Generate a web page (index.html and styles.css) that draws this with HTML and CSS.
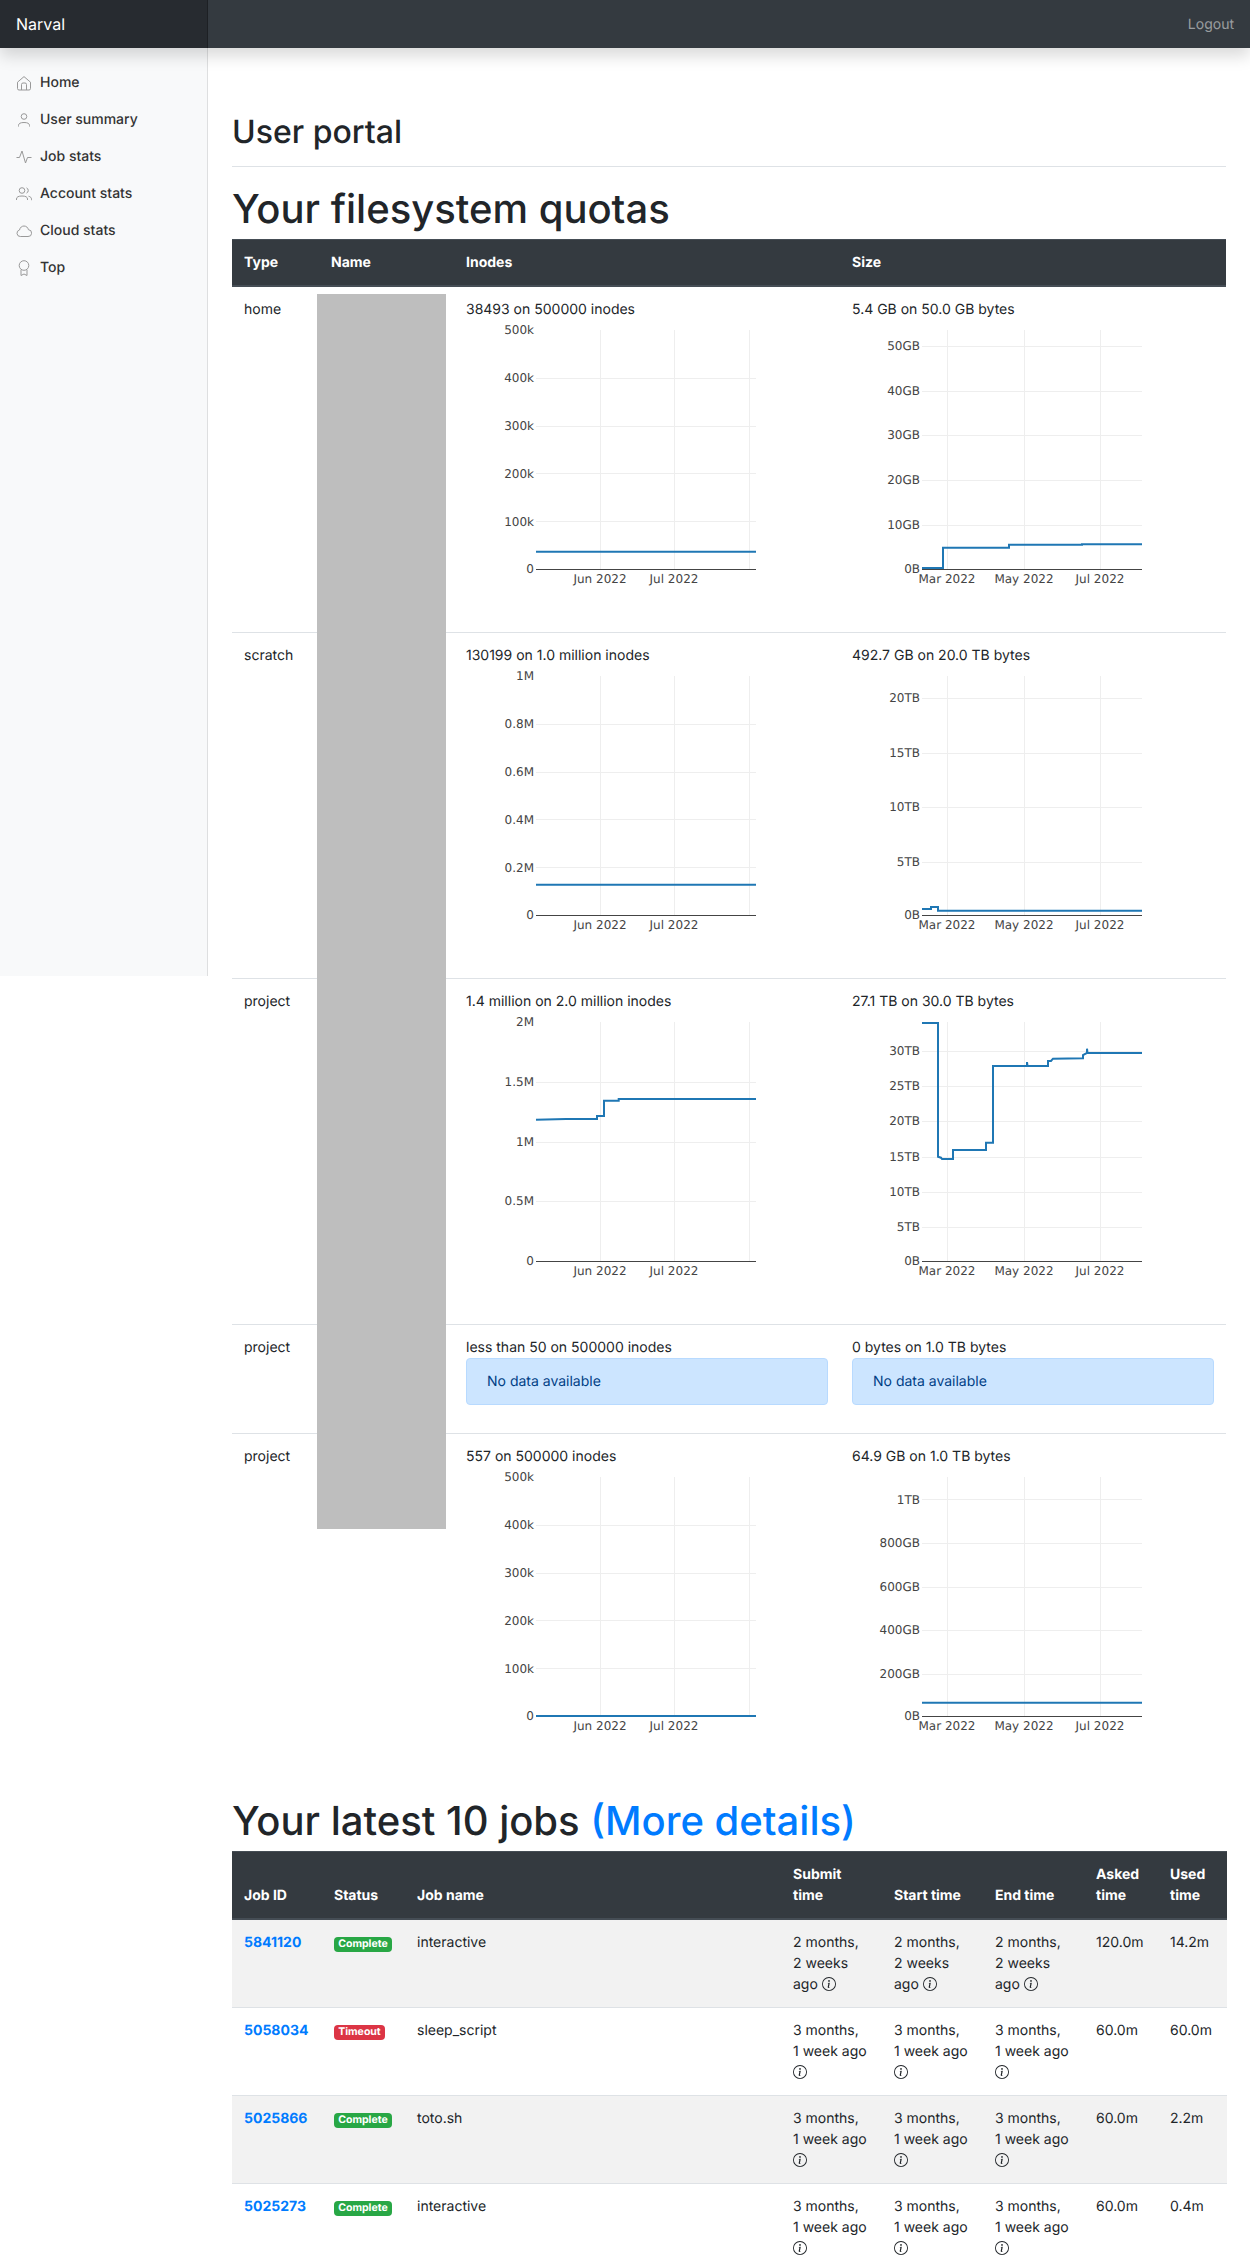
FILE: index.html
```html
<!DOCTYPE html>
<html lang="en">
<head>
<meta charset="utf-8">
<title>Narval</title>
<link rel="stylesheet" href="styles.css">
</head>
<body>
<header class="navbar">
  <a class="brand" href="#">Narval</a>
  <a class="logout" href="#">Logout</a>
</header>
<div class="layout">
  <nav class="sidebar">
    <a class="side-link" href="#"><svg class="side-icon" viewBox="0 0 16 16"><path d="M1.500 7.200 8 1.600l6.500 5.600V13.500a1.500 1.500 0 0 1-1.500 1.500H3a1.500 1.500 0 0 1-1.500-1.500Z"/><path d="M5.500 15V9.500a1.500 1.500 0 0 1 1.500-1.500h2a1.500 1.500 0 0 1 1.500 1.500V15"/></svg>Home</a>
    <a class="side-link" href="#"><svg class="side-icon" viewBox="0 0 16 16"><circle cx="8" cy="4.500" r="2.800"/><path d="M2.500 14.500v-1c0-2 1.800-3 5.500-3s5.500 1 5.500 3v1"/></svg>User summary</a>
    <a class="side-link" href="#"><svg class="side-icon" viewBox="0 0 16 16"><path d="M0.500 8.500h3L6 2l3.500 12 2-5.500h4"/></svg>Job stats</a>
    <a class="side-link" href="#"><svg class="side-icon" viewBox="0 0 16 16"><circle cx="6" cy="4.500" r="2.800"/><path d="M0.500 14v-1c0-2 1.800-3 5.500-3s5.500 1 5.500 3v1"/><path d="M10.500 1.900a2.800 2.800 0 0 1 0 5.200M12.500 10.200c2 .5 3 1.500 3 3v1"/></svg>Account stats</a>
    <a class="side-link" href="#"><svg class="side-icon" viewBox="0 0 16 16"><path d="M4.300 13.500A3.300 3.300 0 0 1 3.500 7C4 4.400 6 3 8 3c2.300 0 4 1.600 4.400 3.700A3.400 3.400 0 0 1 12 13.500Z"/></svg>Cloud stats</a>
    <a class="side-link" href="#"><svg class="side-icon" viewBox="0 0 16 16"><circle cx="8" cy="5.500" r="4.800"/><path d="M5 9.800V15.500l3-1.500 3 1.500V9.800"/></svg>Top</a>
  </nav>
  <main class="main">
    <h2 class="page-title">User portal</h2>
    <h1 class="section-title">Your filesystem quotas</h1>
    <table class="table quota-table">
      <thead>
        <tr>
          <th class="q-type">Type</th>
          <th class="q-name">Name</th>
          <th class="q-col">Inodes</th>
          <th class="q-col">Size</th>
        </tr>
      </thead>
      <tbody>
        <tr>
          <td>home</td>
          <td></td>
          <td>38493 on 500000 inodes
            <svg class="chart" viewBox="0 -1 362 300">
              <g class="grid"><path d="M134.500 9V248M208.500 9V248M283.500 9V248M70 57.500H290M70 105.500H290M70 152.500H290M70 200.500H290"/></g>
              <g class="y-labels"><text x="68" y="13">500k</text><text x="68" y="61">400k</text><text x="68" y="109">300k</text><text x="68" y="157">200k</text><text x="68" y="205">100k</text><text x="68" y="252">0</text></g>
              <g class="x-labels"><text x="134" y="262">Jun 2022</text><text x="208" y="262">Jul 2022</text></g>
              <path class="axis" d="M70 248.500H290"/>
              <polyline class="trace" points="70,230.700 290,230.700"/>
            </svg>
          </td>
          <td>5.4 GB on 50.0 GB bytes
            <svg class="chart" viewBox="0 -1 362 300">
              <g class="grid"><path d="M95.500 9V248M172.500 9V248M248.500 9V248M70 25.500H290M70 70.500H290M70 114.500H290M70 159.500H290M70 204.500H290"/></g>
              <g class="y-labels"><text x="68" y="29">50GB</text><text x="68" y="74">40GB</text><text x="68" y="118">30GB</text><text x="68" y="163">20GB</text><text x="68" y="208">10GB</text><text x="68" y="252">0B</text></g>
              <g class="x-labels"><text x="95" y="262">Mar 2022</text><text x="172" y="262">May 2022</text><text x="248" y="262">Jul 2022</text></g>
              <path class="axis" d="M70 248.500H290"/>
              <polyline class="trace" points="70,247 91,247 91,226.700 157,226.700 157,223.700 230,223.700 230,223.200 290,223.200"/>
            </svg>
          </td>
        </tr>
        <tr>
          <td>scratch</td>
          <td></td>
          <td>130199 on 1.0 million inodes
            <svg class="chart" viewBox="0 -1 362 300">
              <g class="grid"><path d="M134.500 9V248M208.500 9V248M283.500 9V248M70 57.500H290M70 105.500H290M70 152.500H290M70 200.500H290"/></g>
              <g class="y-labels"><text x="68" y="13">1M</text><text x="68" y="61">0.8M</text><text x="68" y="109">0.6M</text><text x="68" y="157">0.4M</text><text x="68" y="205">0.2M</text><text x="68" y="252">0</text></g>
              <g class="x-labels"><text x="134" y="262">Jun 2022</text><text x="208" y="262">Jul 2022</text></g>
              <path class="axis" d="M70 248.500H290"/>
              <polyline class="trace" points="70,217.700 290,217.700"/>
            </svg>
          </td>
          <td>492.7 GB on 20.0 TB bytes
            <svg class="chart" viewBox="0 -1 362 300">
              <g class="grid"><path d="M95.500 9V248M172.500 9V248M248.500 9V248M70 31.500H290M70 86.500H290M70 140.500H290M70 195.500H290"/></g>
              <g class="y-labels"><text x="68" y="35">20TB</text><text x="68" y="90">15TB</text><text x="68" y="144">10TB</text><text x="68" y="199">5TB</text><text x="68" y="252">0B</text></g>
              <g class="x-labels"><text x="95" y="262">Mar 2022</text><text x="172" y="262">May 2022</text><text x="248" y="262">Jul 2022</text></g>
              <path class="axis" d="M70 248.500H290"/>
              <polyline class="trace" points="70,242 79,242 79,240 86,240 86,243.700 290,243.700"/>
            </svg>
          </td>
        </tr>
        <tr>
          <td>project</td>
          <td></td>
          <td>1.4 million on 2.0 million inodes
            <svg class="chart" viewBox="0 -1 362 300">
              <g class="grid"><path d="M134.500 9V248M208.500 9V248M283.500 9V248M70 69.500H290M70 129.500H290M70 188.500H290"/></g>
              <g class="y-labels"><text x="68" y="13">2M</text><text x="68" y="73">1.5M</text><text x="68" y="133">1M</text><text x="68" y="192">0.5M</text><text x="68" y="252">0</text></g>
              <g class="x-labels"><text x="134" y="262">Jun 2022</text><text x="208" y="262">Jul 2022</text></g>
              <path class="axis" d="M70 248.500H290"/>
              <polyline class="trace" points="70,106.700 100,106 131,106 131,103 138,103 138,87.700 152.700,87.700 152.700,86 290,86"/>
            </svg>
          </td>
          <td>27.1 TB on 30.0 TB bytes
            <svg class="chart" viewBox="0 -1 362 300">
              <g class="grid"><path d="M95.500 9V248M172.500 9V248M248.500 9V248M70 38.500H290M70 73.500H290M70 108.500H290M70 144.500H290M70 179.500H290M70 214.500H290"/></g>
              <g class="y-labels"><text x="68" y="42">30TB</text><text x="68" y="77">25TB</text><text x="68" y="112">20TB</text><text x="68" y="148">15TB</text><text x="68" y="183">10TB</text><text x="68" y="218">5TB</text><text x="68" y="252">0B</text></g>
              <g class="x-labels"><text x="95" y="262">Mar 2022</text><text x="172" y="262">May 2022</text><text x="248" y="262">Jul 2022</text></g>
              <path class="axis" d="M70 248.500H290"/>
              <polyline class="trace" points="70,10 86,10 86,143.700 89,144.700 90,146 101,146 101,137 134,137 134,129.700 141,129.700 141,53 175,53 175,49 175.500,53 196,53 196,48 199,48 201,45.700 231,45.300 231,42 235,40 235,35.700 235.500,40 290,40"/>
            </svg>
          </td>
        </tr>
        <tr>
          <td>project</td>
          <td></td>
          <td>less than 50 on 500000 inodes
            <div class="alert">No data available</div>
          </td>
          <td>0 bytes on 1.0 TB bytes
            <div class="alert">No data available</div>
          </td>
        </tr>
        <tr>
          <td>project</td>
          <td></td>
          <td>557 on 500000 inodes
            <svg class="chart" viewBox="0 -1 362 300">
              <g class="grid"><path d="M134.500 9V248M208.500 9V248M283.500 9V248M70 57.500H290M70 105.500H290M70 152.500H290M70 200.500H290"/></g>
              <g class="y-labels"><text x="68" y="13">500k</text><text x="68" y="61">400k</text><text x="68" y="109">300k</text><text x="68" y="157">200k</text><text x="68" y="205">100k</text><text x="68" y="252">0</text></g>
              <g class="x-labels"><text x="134" y="262">Jun 2022</text><text x="208" y="262">Jul 2022</text></g>
              <path class="axis" d="M70 248.500H290"/>
              <polyline class="trace" points="70,248 290,248"/>
            </svg>
          </td>
          <td>64.9 GB on 1.0 TB bytes
            <svg class="chart" viewBox="0 -1 362 300">
              <g class="grid"><path d="M95.500 9V248M172.500 9V248M248.500 9V248M70 31.500H290M70 75.500H290M70 119.500H290M70 162.500H290M70 206.500H290"/></g>
              <g class="y-labels"><text x="68" y="36">1TB</text><text x="68" y="79">800GB</text><text x="68" y="123">600GB</text><text x="68" y="166">400GB</text><text x="68" y="210">200GB</text><text x="68" y="252">0B</text></g>
              <g class="x-labels"><text x="95" y="262">Mar 2022</text><text x="172" y="262">May 2022</text><text x="248" y="262">Jul 2022</text></g>
              <path class="axis" d="M70 248.500H290"/>
              <polyline class="trace" points="70,234.700 290,234.700"/>
            </svg>
          </td>
        </tr>
      </tbody>
    </table>
    <h1 class="section-title">Your latest 10 jobs <a class="more-link" href="#">(More details)</a></h1>
    <table class="table jobs-table">
      <thead>
        <tr>
          <th class="j-id">Job ID</th>
          <th class="j-status">Status</th>
          <th class="j-name">Job name</th>
          <th class="j-time">Submit time</th>
          <th class="j-time">Start time</th>
          <th class="j-time">End time</th>
          <th class="j-asked">Asked time</th>
          <th class="j-used">Used time</th>
        </tr>
      </thead>
      <tbody>
        <tr class="stripe">
          <td><a class="job-link" href="#">5841120</a></td>
          <td><span class="badge badge-ok">Complete</span></td>
          <td>interactive</td>
          <td>2 months, 2&nbsp;weeks ago <svg class="info" viewBox="0 0 16 16"><path d="M8 15A7 7 0 1 1 8 1a7 7 0 0 1 0 14zm0 1A8 8 0 1 0 8 0a8 8 0 0 0 0 16z"/><path d="m8.930 6.588-2.290.287-.082.380.450.083c.294.070.352.176.288.469l-.738 3.468c-.194.897.105 1.319.808 1.319.545 0 1.178-.252 1.465-.598l.088-.416c-.200.176-.492.246-.686.246-.275 0-.375-.193-.304-.533L8.930 6.588zM9 4.500a1 1 0 1 1-2 0 1 1 0 0 1 2 0z"/></svg></td>
          <td>2 months, 2&nbsp;weeks ago <svg class="info" viewBox="0 0 16 16"><path d="M8 15A7 7 0 1 1 8 1a7 7 0 0 1 0 14zm0 1A8 8 0 1 0 8 0a8 8 0 0 0 0 16z"/><path d="m8.930 6.588-2.290.287-.082.380.450.083c.294.070.352.176.288.469l-.738 3.468c-.194.897.105 1.319.808 1.319.545 0 1.178-.252 1.465-.598l.088-.416c-.200.176-.492.246-.686.246-.275 0-.375-.193-.304-.533L8.930 6.588zM9 4.500a1 1 0 1 1-2 0 1 1 0 0 1 2 0z"/></svg></td>
          <td>2 months, 2&nbsp;weeks ago <svg class="info" viewBox="0 0 16 16"><path d="M8 15A7 7 0 1 1 8 1a7 7 0 0 1 0 14zm0 1A8 8 0 1 0 8 0a8 8 0 0 0 0 16z"/><path d="m8.930 6.588-2.290.287-.082.380.450.083c.294.070.352.176.288.469l-.738 3.468c-.194.897.105 1.319.808 1.319.545 0 1.178-.252 1.465-.598l.088-.416c-.200.176-.492.246-.686.246-.275 0-.375-.193-.304-.533L8.930 6.588zM9 4.500a1 1 0 1 1-2 0 1 1 0 0 1 2 0z"/></svg></td>
          <td>120.0m</td>
          <td>14.2m</td>
        </tr>
        <tr>
          <td><a class="job-link" href="#">5058034</a></td>
          <td><span class="badge badge-bad">Timeout</span></td>
          <td>sleep_script</td>
          <td>3 months, 1&nbsp;week ago <svg class="info" viewBox="0 0 16 16"><path d="M8 15A7 7 0 1 1 8 1a7 7 0 0 1 0 14zm0 1A8 8 0 1 0 8 0a8 8 0 0 0 0 16z"/><path d="m8.930 6.588-2.290.287-.082.380.450.083c.294.070.352.176.288.469l-.738 3.468c-.194.897.105 1.319.808 1.319.545 0 1.178-.252 1.465-.598l.088-.416c-.200.176-.492.246-.686.246-.275 0-.375-.193-.304-.533L8.930 6.588zM9 4.500a1 1 0 1 1-2 0 1 1 0 0 1 2 0z"/></svg></td>
          <td>3 months, 1&nbsp;week ago <svg class="info" viewBox="0 0 16 16"><path d="M8 15A7 7 0 1 1 8 1a7 7 0 0 1 0 14zm0 1A8 8 0 1 0 8 0a8 8 0 0 0 0 16z"/><path d="m8.930 6.588-2.290.287-.082.380.450.083c.294.070.352.176.288.469l-.738 3.468c-.194.897.105 1.319.808 1.319.545 0 1.178-.252 1.465-.598l.088-.416c-.200.176-.492.246-.686.246-.275 0-.375-.193-.304-.533L8.930 6.588zM9 4.500a1 1 0 1 1-2 0 1 1 0 0 1 2 0z"/></svg></td>
          <td>3 months, 1&nbsp;week ago <svg class="info" viewBox="0 0 16 16"><path d="M8 15A7 7 0 1 1 8 1a7 7 0 0 1 0 14zm0 1A8 8 0 1 0 8 0a8 8 0 0 0 0 16z"/><path d="m8.930 6.588-2.290.287-.082.380.450.083c.294.070.352.176.288.469l-.738 3.468c-.194.897.105 1.319.808 1.319.545 0 1.178-.252 1.465-.598l.088-.416c-.200.176-.492.246-.686.246-.275 0-.375-.193-.304-.533L8.930 6.588zM9 4.500a1 1 0 1 1-2 0 1 1 0 0 1 2 0z"/></svg></td>
          <td>60.0m</td>
          <td>60.0m</td>
        </tr>
        <tr class="stripe">
          <td><a class="job-link" href="#">5025866</a></td>
          <td><span class="badge badge-ok">Complete</span></td>
          <td>toto.sh</td>
          <td>3 months, 1&nbsp;week ago <svg class="info" viewBox="0 0 16 16"><path d="M8 15A7 7 0 1 1 8 1a7 7 0 0 1 0 14zm0 1A8 8 0 1 0 8 0a8 8 0 0 0 0 16z"/><path d="m8.930 6.588-2.290.287-.082.380.450.083c.294.070.352.176.288.469l-.738 3.468c-.194.897.105 1.319.808 1.319.545 0 1.178-.252 1.465-.598l.088-.416c-.200.176-.492.246-.686.246-.275 0-.375-.193-.304-.533L8.930 6.588zM9 4.500a1 1 0 1 1-2 0 1 1 0 0 1 2 0z"/></svg></td>
          <td>3 months, 1&nbsp;week ago <svg class="info" viewBox="0 0 16 16"><path d="M8 15A7 7 0 1 1 8 1a7 7 0 0 1 0 14zm0 1A8 8 0 1 0 8 0a8 8 0 0 0 0 16z"/><path d="m8.930 6.588-2.290.287-.082.380.450.083c.294.070.352.176.288.469l-.738 3.468c-.194.897.105 1.319.808 1.319.545 0 1.178-.252 1.465-.598l.088-.416c-.200.176-.492.246-.686.246-.275 0-.375-.193-.304-.533L8.930 6.588zM9 4.500a1 1 0 1 1-2 0 1 1 0 0 1 2 0z"/></svg></td>
          <td>3 months, 1&nbsp;week ago <svg class="info" viewBox="0 0 16 16"><path d="M8 15A7 7 0 1 1 8 1a7 7 0 0 1 0 14zm0 1A8 8 0 1 0 8 0a8 8 0 0 0 0 16z"/><path d="m8.930 6.588-2.290.287-.082.380.450.083c.294.070.352.176.288.469l-.738 3.468c-.194.897.105 1.319.808 1.319.545 0 1.178-.252 1.465-.598l.088-.416c-.200.176-.492.246-.686.246-.275 0-.375-.193-.304-.533L8.930 6.588zM9 4.500a1 1 0 1 1-2 0 1 1 0 0 1 2 0z"/></svg></td>
          <td>60.0m</td>
          <td>2.2m</td>
        </tr>
        <tr>
          <td><a class="job-link" href="#">5025273</a></td>
          <td><span class="badge badge-ok">Complete</span></td>
          <td>interactive</td>
          <td>3 months, 1&nbsp;week ago <svg class="info" viewBox="0 0 16 16"><path d="M8 15A7 7 0 1 1 8 1a7 7 0 0 1 0 14zm0 1A8 8 0 1 0 8 0a8 8 0 0 0 0 16z"/><path d="m8.930 6.588-2.290.287-.082.380.450.083c.294.070.352.176.288.469l-.738 3.468c-.194.897.105 1.319.808 1.319.545 0 1.178-.252 1.465-.598l.088-.416c-.200.176-.492.246-.686.246-.275 0-.375-.193-.304-.533L8.930 6.588zM9 4.500a1 1 0 1 1-2 0 1 1 0 0 1 2 0z"/></svg></td>
          <td>3 months, 1&nbsp;week ago <svg class="info" viewBox="0 0 16 16"><path d="M8 15A7 7 0 1 1 8 1a7 7 0 0 1 0 14zm0 1A8 8 0 1 0 8 0a8 8 0 0 0 0 16z"/><path d="m8.930 6.588-2.290.287-.082.380.450.083c.294.070.352.176.288.469l-.738 3.468c-.194.897.105 1.319.808 1.319.545 0 1.178-.252 1.465-.598l.088-.416c-.200.176-.492.246-.686.246-.275 0-.375-.193-.304-.533L8.930 6.588zM9 4.500a1 1 0 1 1-2 0 1 1 0 0 1 2 0z"/></svg></td>
          <td>3 months, 1&nbsp;week ago <svg class="info" viewBox="0 0 16 16"><path d="M8 15A7 7 0 1 1 8 1a7 7 0 0 1 0 14zm0 1A8 8 0 1 0 8 0a8 8 0 0 0 0 16z"/><path d="m8.930 6.588-2.290.287-.082.380.450.083c.294.070.352.176.288.469l-.738 3.468c-.194.897.105 1.319.808 1.319.545 0 1.178-.252 1.465-.598l.088-.416c-.200.176-.492.246-.686.246-.275 0-.375-.193-.304-.533L8.930 6.588zM9 4.500a1 1 0 1 1-2 0 1 1 0 0 1 2 0z"/></svg></td>
          <td>60.0m</td>
          <td>0.4m</td>
        </tr>
      </tbody>
    </table>
  </main>
</div>
<div class="redaction"></div>
</body>
</html>
```
FILE: styles.css
```css
* { box-sizing: border-box; }

html, body {
  margin: 0;
  height: 2266px;
  overflow: hidden;
}

body {
  position: relative;
  background: #fff;
  color: #212529;
  font-family: Inter, "Liberation Sans", sans-serif;
  font-size: 14px;
  line-height: 1.5;
  text-rendering: geometricPrecision;
}

a { text-decoration: none; }

.navbar {
  position: relative;
  z-index: 2;
  display: flex;
  justify-content: space-between;
  align-items: center;
  height: 48px;
  background: #343a40;
  box-shadow: 0 8px 16px rgba(0, 0, 0, .15);
}

.brand {
  display: block;
  width: 208px;
  padding: 12px 16px;
  background: rgba(0, 0, 0, .25);
  box-shadow: inset -1px 0 0 rgba(0, 0, 0, .25);
  color: #fff;
  font-size: 16px;
  line-height: 24px;
}

.logout {
  padding: 8px 16px;
  color: rgba(255, 255, 255, .5);
}

.layout {
  display: flex;
  align-items: flex-start;
}

.sidebar {
  flex: 0 0 208px;
  display: flex;
  flex-direction: column;
  height: 928px;
  padding-top: 16px;
  background: #f8f9fa;
  box-shadow: inset -1px 0 0 rgba(0, 0, 0, .1);
}

.side-link {
  display: flex;
  align-items: center;
  gap: 8px;
  padding: 8px 16px;
  color: #333;
  font-weight: 500;
}

.side-icon {
  flex: none;
  width: 16px;
  height: 16px;
  fill: none;
  stroke: #999;
  stroke-width: 1;
}

.main {
  flex: 1;
  min-width: 0;
  padding: 65px 24px 0;
}

.page-title {
  margin: 0 0 16px;
  padding-bottom: 15px;
  border-bottom: 1px solid #dee2e6;
  font-size: 32px;
  font-weight: 500;
  line-height: 1.2;
}

.section-title {
  margin: 0 0 6px;
  padding-top: 2px;
  font-size: 40px;
  font-weight: 500;
  line-height: 1.2;
}

.more-link { color: #007bff; }

.table {
  width: 100%;
  margin-bottom: 16px;
  border-collapse: collapse;
  table-layout: fixed;
}

.table th,
.table td {
  padding: 12px;
  border-top: 1px solid #dee2e6;
  text-align: left;
  vertical-align: top;
}

.table thead th {
  vertical-align: bottom;
  background: #343a40;
  border-top-color: #454d55;
  border-bottom: 2px solid #454d55;
  color: #fff;
  font-weight: 700;
}

.q-type { width: 87px; }
.q-name { width: 135px; }
.q-col { width: 386px; }

.j-id { width: 90px; }
.j-status { width: 83px; }
.j-name { width: 376px; }
.j-time { width: 101px; }
.j-asked { width: 74px; }
.j-used { width: 69px; }

.chart {
  display: block;
  width: 362px;
  height: 300px;
}

.grid path {
  fill: none;
  stroke: #eee;
  stroke-width: 1;
}

.axis {
  fill: none;
  stroke: #444;
  stroke-width: 1;
}

.trace {
  fill: none;
  stroke: #1f77b4;
  stroke-width: 2;
}

.y-labels text,
.x-labels text {
  fill: #444;
  font-family: "DejaVu Sans", sans-serif;
  font-size: 12px;
}

.y-labels text { text-anchor: end; }
.x-labels text { text-anchor: middle; }

.alert {
  margin-bottom: 16px;
  padding: 12px 20px;
  background: #cce5ff;
  border: 1px solid #b8daff;
  border-radius: 4px;
  color: #004085;
}

.stripe td { background: #f2f2f2; }

.job-link {
  color: #007bff;
  font-weight: 700;
}

.badge {
  display: inline-block;
  padding: 2.600px 4.200px;
  border-radius: 4px;
  color: #fff;
  font-size: 10.500px;
  font-weight: 700;
  line-height: 1;
  vertical-align: baseline;
}

.badge-ok { background: #28a745; }
.badge-bad { background: #dc3545; }

.info {
  display: inline-block;
  width: 14px;
  height: 14px;
  vertical-align: -2px;
  fill: currentColor;
}

.redaction {
  position: absolute;
  top: 294px;
  left: 317px;
  width: 129px;
  height: 1235px;
  background: #bebebe;
}
```
